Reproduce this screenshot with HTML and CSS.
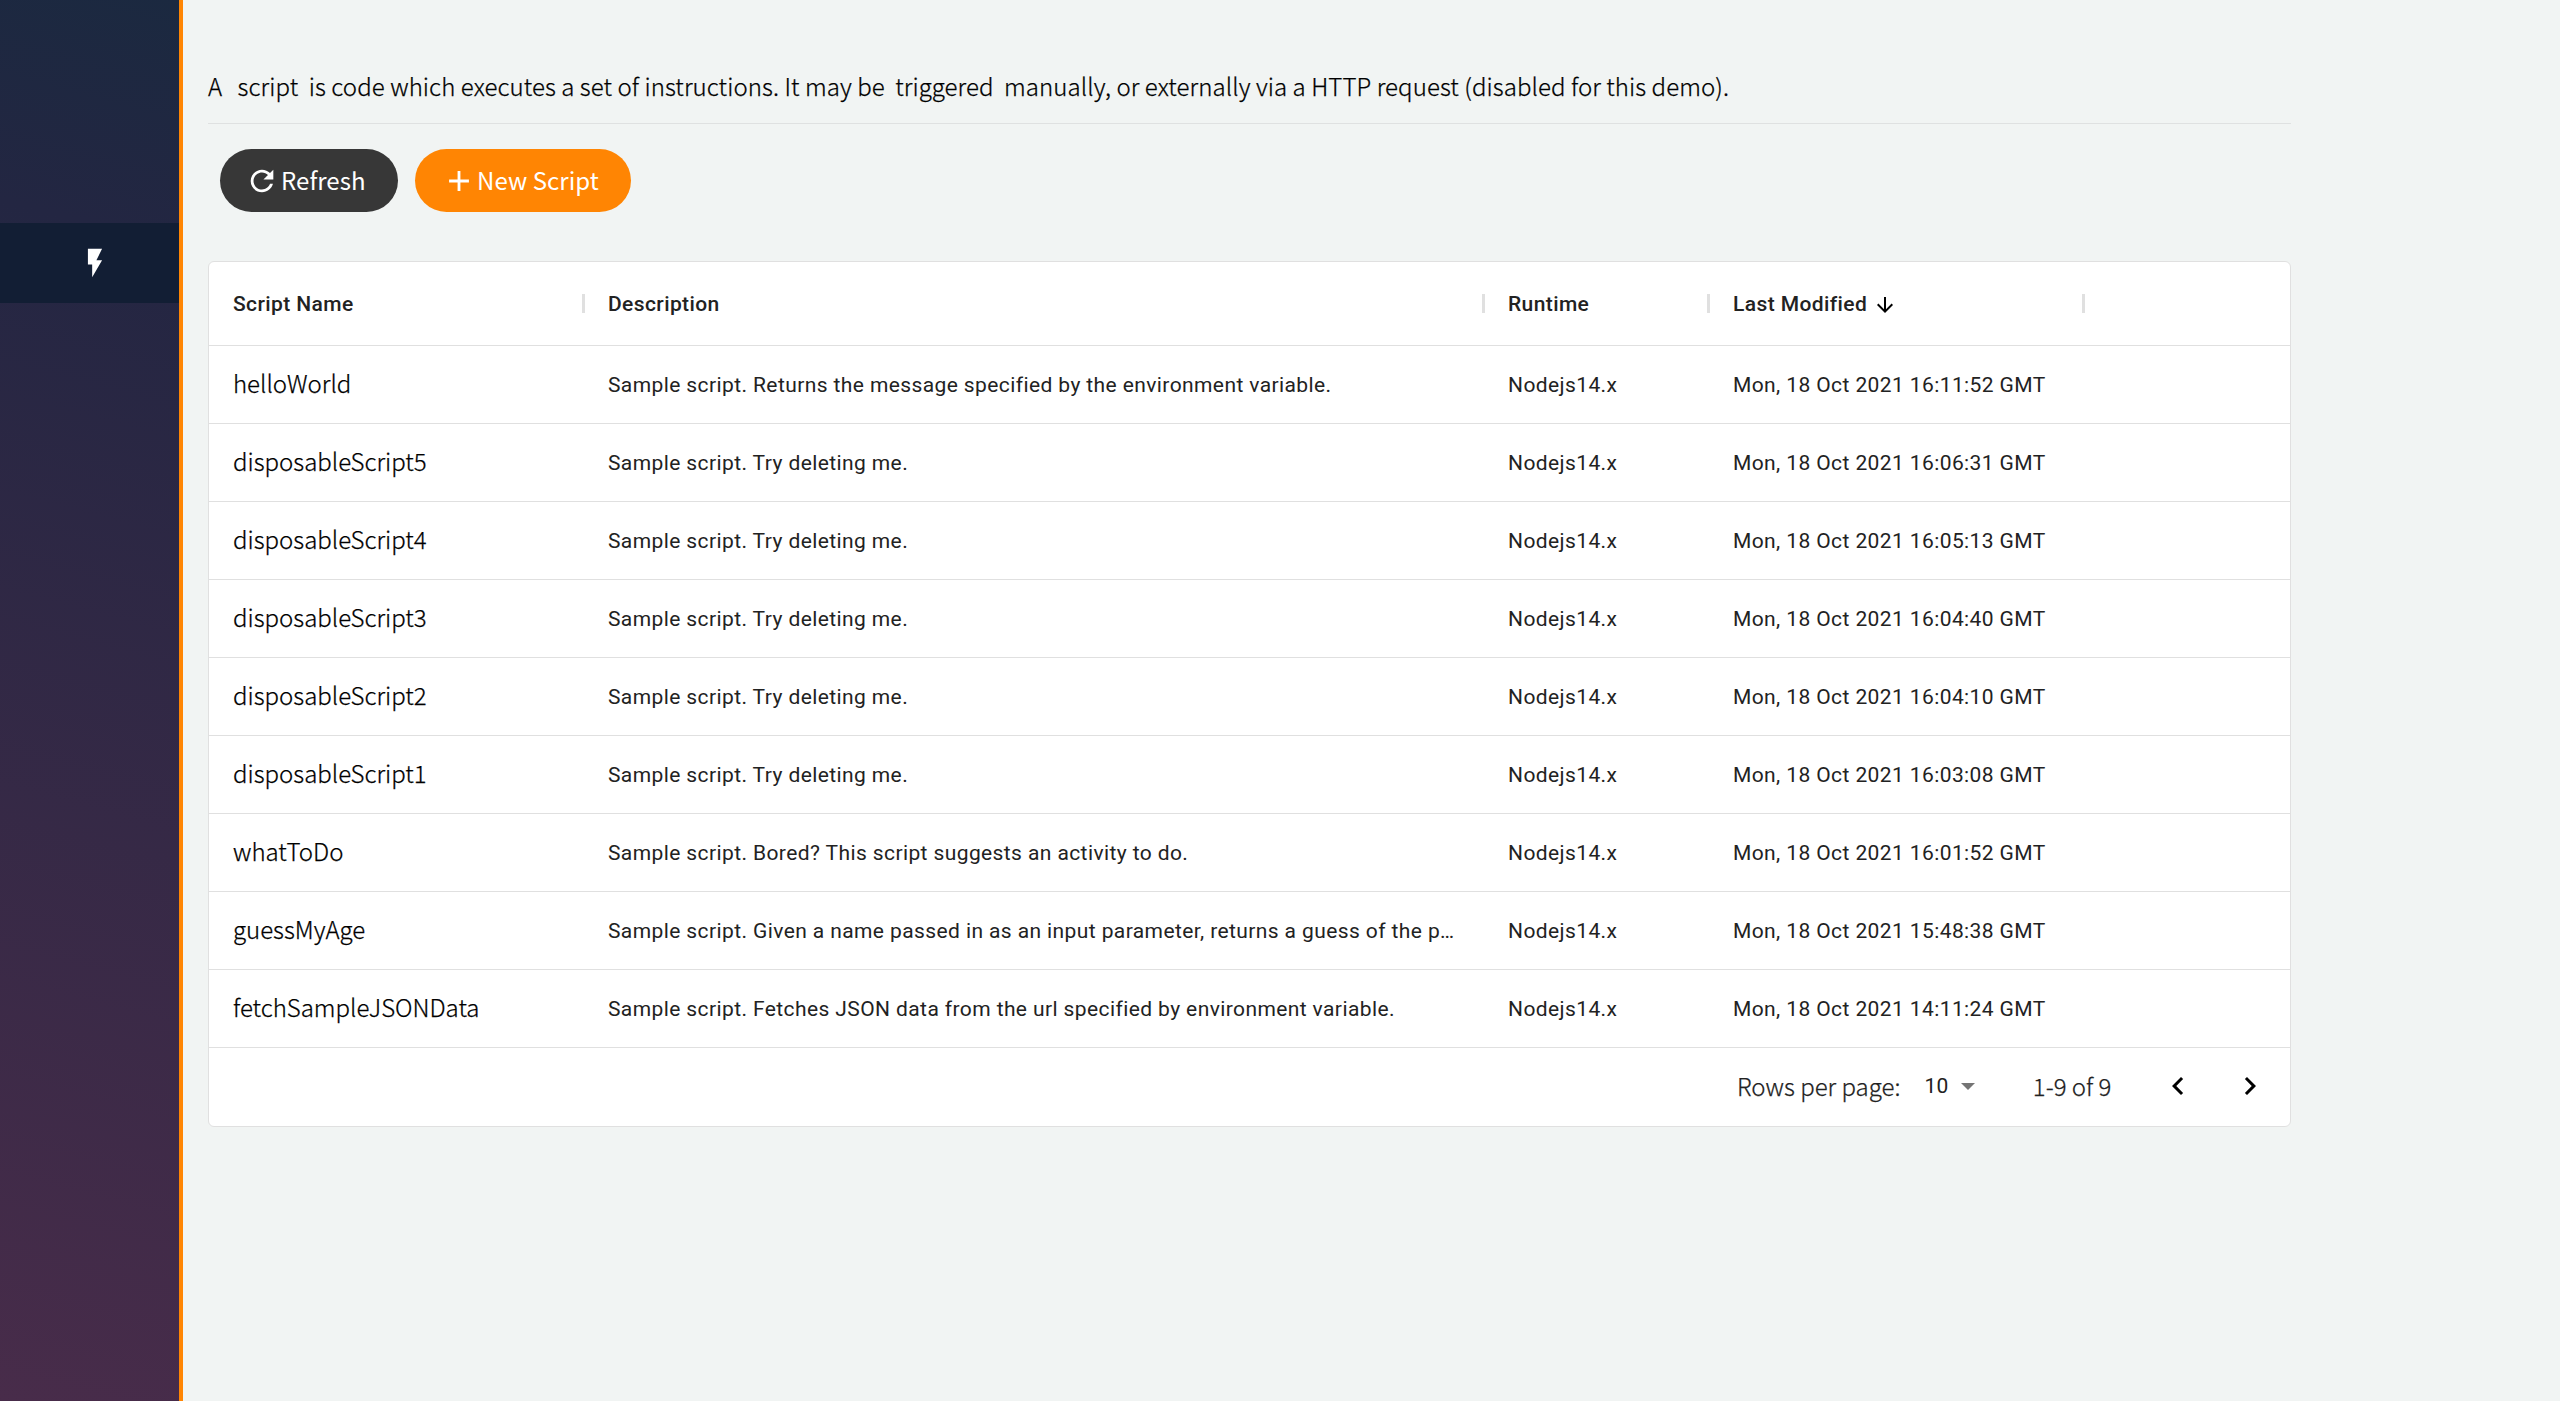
FILE: index.html
```html
<!DOCTYPE html>
<html lang="en">
<head>
<meta charset="utf-8">
<title>Scripts</title>
<link rel="stylesheet" href="styles.css">
</head>
<body>
<div class="app">
  <nav class="sidebar">
    <a class="nav-item"><svg class="icon" viewBox="0 0 24 24"><path d="M7 2v11h3v9l7-12h-4l4-8z"/></svg></a>
  </nav>
  <main class="content">
    <p class="intro">A <span class="term">script</span> is code which executes a set of instructions. It may be <span class="term trig">triggered</span> manually, or externally via a HTTP request (disabled for this demo).</p>
    <div class="actions">
      <button class="btn refresh"><svg class="icon" viewBox="0 0 24 24"><path d="M17.65 6.35C16.2 4.9 14.21 4 12 4c-4.42 0-7.99 3.58-7.99 8s3.57 8 7.99 8c3.73 0 6.84-2.55 7.73-6h-2.08c-.82 2.33-3.04 4-5.65 4-3.31 0-6-2.69-6-6s2.69-6 6-6c1.66 0 3.14.69 4.22 1.78L13 11h7V4l-2.35 2.35z"/></svg><span>Refresh</span></button>
      <button class="btn create"><svg class="icon" viewBox="0 0 24 24"><path d="M19 13h-6v6h-2v-6H5v-2h6V5h2v6h6v2z"/></svg><span>New Script</span></button>
    </div>
    <section class="grid">
      <div class="row head"><div class="cell">Script Name</div><div class="cell">Description</div><div class="cell">Runtime</div><div class="cell">Last Modified<svg class="sort" viewBox="0 0 24 24"><path d="M20 12l-1.41-1.41L13 16.17V4h-2v12.17l-5.58-5.59L4 12l8 8 8-8z"/></svg></div><div class="cell"></div></div>
      <div class="row"><div class="cell name">helloWorld</div><div class="cell"><span>Sample script. Returns the message specified by the environment variable.</span></div><div class="cell">Nodejs14.x</div><div class="cell">Mon, 18 Oct 2021 16:11:52 GMT</div></div>
      <div class="row"><div class="cell name">disposableScript5</div><div class="cell"><span>Sample script. Try deleting me.</span></div><div class="cell">Nodejs14.x</div><div class="cell">Mon, 18 Oct 2021 16:06:31 GMT</div></div>
      <div class="row"><div class="cell name">disposableScript4</div><div class="cell"><span>Sample script. Try deleting me.</span></div><div class="cell">Nodejs14.x</div><div class="cell">Mon, 18 Oct 2021 16:05:13 GMT</div></div>
      <div class="row"><div class="cell name">disposableScript3</div><div class="cell"><span>Sample script. Try deleting me.</span></div><div class="cell">Nodejs14.x</div><div class="cell">Mon, 18 Oct 2021 16:04:40 GMT</div></div>
      <div class="row"><div class="cell name">disposableScript2</div><div class="cell"><span>Sample script. Try deleting me.</span></div><div class="cell">Nodejs14.x</div><div class="cell">Mon, 18 Oct 2021 16:04:10 GMT</div></div>
      <div class="row"><div class="cell name">disposableScript1</div><div class="cell"><span>Sample script. Try deleting me.</span></div><div class="cell">Nodejs14.x</div><div class="cell">Mon, 18 Oct 2021 16:03:08 GMT</div></div>
      <div class="row"><div class="cell name">whatToDo</div><div class="cell"><span>Sample script. Bored? This script suggests an activity to do.</span></div><div class="cell">Nodejs14.x</div><div class="cell">Mon, 18 Oct 2021 16:01:52 GMT</div></div>
      <div class="row"><div class="cell name">guessMyAge</div><div class="cell"><span>Sample script. Given a name passed in as an input parameter, returns a guess of the p…</span></div><div class="cell">Nodejs14.x</div><div class="cell">Mon, 18 Oct 2021 15:48:38 GMT</div></div>
      <div class="row"><div class="cell name">fetchSampleJSONData</div><div class="cell"><span>Sample script. Fetches JSON data from the url specified by environment variable.</span></div><div class="cell">Nodejs14.x</div><div class="cell">Mon, 18 Oct 2021 14:11:24 GMT</div></div>
      <div class="pager">
        <span class="label">Rows per page:</span>
        <span class="size">10</span>
        <svg class="caret" viewBox="0 0 14 7"><path d="M0 0h14L7 7z"/></svg>
        <span class="range">1-9 of 9</span>
        <svg class="arrow" viewBox="0 0 24 24"><path d="M15.41 7.41L14 6l-6 6 6 6 1.41-1.41L10.83 12z"/></svg>
        <svg class="arrow next" viewBox="0 0 24 24"><path d="M10 6L8.59 7.41 13.17 12l-4.58 4.59L10 18l6-6z"/></svg>
      </div>
    </section>
  </main>
</div>
</body>
</html>
```
FILE: styles.css
```css
* { box-sizing: border-box; }
body { margin: 0; background: #f1f4f3; color: #000; font: 300 24px/36px "Noto Sans CJK JP", sans-serif; }
svg { fill: currentColor; flex: none; display: block; }
.app { display: flex; height: 1401px; overflow: hidden; }
.sidebar { flex: none; width: 183px; padding-top: 223px; border-right: 4px solid #ff8503; background: linear-gradient(195deg, #1b2940 0%, #232642 17%, #482c4a 100%); }
.nav-item { display: flex; align-items: center; height: 80px; padding-left: 78px; background: #121e34; color: #fff; }
.icon { width: 34px; height: 34px; }
.content { width: 2108px; padding: 68px 0 0 25px; }
.intro { margin: 0; height: 56px; border-bottom: 1px solid #dfe1e1; white-space: nowrap; letter-spacing: .085px; }
.intro, .name, .label, .range { -webkit-text-stroke: .25px currentColor; }
.term { margin: 0 5px 0 10px; }
.trig { margin-left: 5px; }
.actions { display: flex; gap: 17px; padding: 25px 0 0 12px; }
.btn { display: flex; align-items: center; height: 63px; padding: 0; border: 0; border-radius: 32px; color: #fff; font: inherit; font-weight: 400; white-space: nowrap; }
.btn span { margin-left: 2px; padding-bottom: 1px; letter-spacing: .06px; }
.refresh { width: 178px; padding-left: 25px; background: #373737; }
.create { width: 216px; padding-left: 27px; background: #ff8503; }
.create .icon + span { margin-left: 1px; }
.grid { margin-top: 49px; height: 866px; background: #fff; border: 1px solid #e0e0e0; border-radius: 6px; font-family: Roboto, sans-serif; }
.row { display: grid; grid-template-columns: 375px 900px 225px 375px 1fr; height: 78px; border-bottom: 1px solid #e0e0e0; }
.cell { display: flex; align-items: center; min-width: 0; padding: 0 24px; font-size: 21px; font-weight: 400; letter-spacing: .4px; color: #222; white-space: nowrap; }
.name { padding-bottom: 3px; font: 300 24px/36px "Noto Sans CJK JP", sans-serif; letter-spacing: 0; color: #000; }
.head { height: 84px; }
.head .cell { font-weight: 500; position: relative; }
.head .cell:not(:last-child)::after { content: ""; position: absolute; right: -1px; top: 32px; width: 3px; height: 19px; background: #e0e0e0; }
.sort { width: 24px; height: 24px; margin: 2px 0 0 6px; color: #000; }
.pager { display: flex; align-items: center; height: 76px; padding-left: 1528px; color: #222; font: 300 24px/36px "Noto Sans CJK JP", sans-serif; white-space: nowrap; }
.size { margin-left: 24px; font: 400 21px Roboto, sans-serif; letter-spacing: .4px; }
.caret { width: 14px; height: 7px; margin-left: 12px; color: #757575; }
.range { margin-left: 58px; }
.arrow { width: 36px; height: 36px; margin-left: 49px; color: #000; }
.next { margin-left: 36px; }
```
